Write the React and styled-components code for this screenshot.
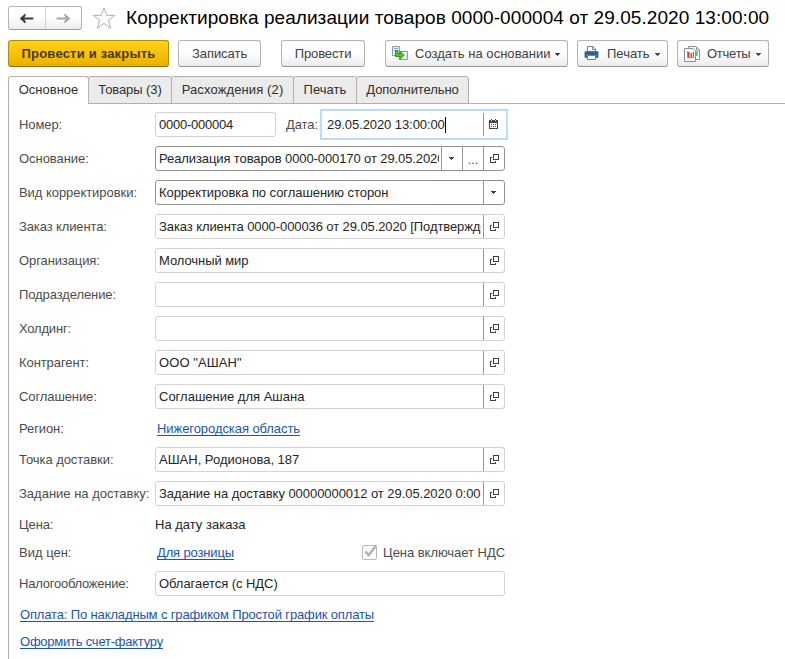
import React from 'react';
import styled, { createGlobalStyle } from 'styled-components';

const GlobalStyle = createGlobalStyle`
  * { box-sizing: border-box; }
  body { margin: 0; background: #fff; overflow: hidden; }
`;

const Page = styled.div`
  width: 785px;
  height: 659px;
  display: flex;
  flex-direction: column;
  font: 13px/16px "Liberation Sans", Arial, sans-serif;
  color: #262626;
  background: #fff;
  overflow: hidden;
  svg { display: block; flex: none; }
`;

const Text = styled.span`
  white-space: pre;
  letter-spacing: ${(p) => p.$track || 0}px;
`;

const Header = styled.header`
  display: flex;
  align-items: center;
  height: 24px;
  margin: 6px 0 10px 8px;
`;

const NavGroup = styled.div`
  display: flex;
  width: 74px;
  height: 24px;
  border: 1px solid #b4b4b4;
  border-bottom-color: #999;
  border-radius: 3px;
  background: linear-gradient(#fff 40%, #ededed);
`;

const NavButton = styled.button`
  display: flex;
  flex: 1;
  align-items: center;
  justify-content: center;
  padding: 1px 0 0;
  border: 0;
  background: none;
  color: ${(p) => (p.$muted ? '#a8a8a8' : '#3c3c3c')};
  & + & { border-left: 1px solid #d2d2d2; }
`;

const Star = styled.svg`
  margin: 0 0 0 10px;
`;

const Title = styled.h1`
  margin: 0 0 0 10px;
  font-size: 19px;
  line-height: 24px;
  font-weight: 400;
  color: #000;
  white-space: nowrap;
  letter-spacing: 0.065px;
`;

const Toolbar = styled.div`
  display: flex;
  height: 27px;
  margin: 0 16px 9px 8px;
`;

const Button = styled.button`
  display: flex;
  align-items: center;
  justify-content: ${(p) => (p.$menu ? 'flex-start' : 'center')};
  width: ${(p) => p.$w}px;
  height: 27px;
  margin: 0 0 0 ${(p) => p.$gap || 0}px;
  padding: ${(p) => (p.$menu ? '0 0 0 6px' : '0')};
  border: 1px solid ${(p) => (p.$primary ? '#b08a0c' : '#b4b4b4')};
  border-bottom-color: ${(p) => (p.$primary ? '#8e6f08' : '#979797')};
  border-radius: 3px;
  background: ${(p) =>
    p.$primary ? 'linear-gradient(#ffd21c, #f9c108 50%, #e9b000)' : 'linear-gradient(#fff 45%, #ebebeb)'};
  font: ${(p) => (p.$primary ? 'bold ' : '')}13px/16px "Liberation Sans", Arial, sans-serif;
  color: ${(p) => (p.$primary ? '#433a22' : '#404040')};
`;

const ButtonText = styled(Text)`
  width: ${(p) => (p.$w ? `${p.$w}px` : 'auto')};
  margin-left: ${(p) => p.$ml || 0}px;
  text-align: left;
`;

const ArrowSlot = styled.span`
  margin-top: 2px;
`;

const Tabs = styled.nav`
  display: flex;
  height: 28px;
  padding-left: 8px;
  background: linear-gradient(#b0b0b0, #b0b0b0) 8px 27px / 100% 1px no-repeat;
`;

const Tab = styled.div`
  display: flex;
  justify-content: center;
  width: ${(p) => p.$w}px;
  height: 28px;
  padding-top: 5px;
  margin-right: -1px;
  border: 1px solid #b0b0b0;
  border-bottom-color: ${(p) => (p.$active ? '#fff' : '#b0b0b0')};
  border-radius: 3px 3px 0 0;
  background: ${(p) => (p.$active ? '#fff' : '#ebebeb')};
  color: #303030;
`;

const Form = styled.main`
  display: flex;
  flex: 1;
  flex-direction: column;
  gap: 9px;
  margin-left: 8px;
  padding: 8px 0 0 10px;
  border-left: 1px solid #b0b0b0;
`;

const Row = styled.div`
  display: flex;
  align-items: center;
  flex: none;
  width: 486px;
  height: ${(p) => p.$h || 25}px;
  padding-top: ${(p) => p.$pt || 0}px;
`;

const Label = styled.label`
  width: ${(p) => p.$w || 136}px;
  padding-left: ${(p) => p.$pl || 0}px;
  flex: none;
  color: #4c4c4c;
`;

const Field = styled.div`
  display: flex;
  flex: ${(p) => (p.$w ? 'none' : '1')};
  width: ${(p) => (p.$w ? `${p.$w}px` : 'auto')};
  min-width: 0;
  height: 25px;
  border: 1px solid ${(p) => (p.$strong ? '#919191' : '#d3d3d3')};
  border-radius: 3px;
  background: #fff;
`;

const DateField = styled(Field)`
  flex: none;
  width: 188px;
  height: 31px;
  margin: -3px -3px -3px 0;
  border: 2px solid #b9dcf8;
  border-radius: 0;
  padding: 2px;
`;

const Value = styled.div`
  flex: 1;
  display: flex;
  align-items: center;
  min-width: 0;
  margin: 0 2px 0 3px;
  overflow: hidden;
`;

const Caret = styled.span`
  width: 1px;
  height: 16px;
  background: #000;
`;

const Affix = styled.div`
  display: flex;
  align-items: center;
  width: 21px;
  padding-left: ${(p) => p.$pl}px;
  flex: none;
  border-left: 1px solid #979797;
  color: #3f3f3f;
`;

const Dots = styled.span`
  font-size: 12px;
  line-height: 14px;
  padding-top: 3px;
`;

const Link = styled.a`
  margin-left: ${(p) => p.$ml || 0}px;
  color: #1b54b4;
  text-decoration: underline;
  text-underline-offset: 2px;
  text-decoration-thickness: 1px;
  text-decoration-skip-ink: none;
  white-space: pre;
  letter-spacing: ${(p) => p.$track || 0}px;
`;

const Check = styled.div`
  display: flex;
  align-items: center;
  gap: 5px;
  margin-left: auto;
  color: #4c4c4c;
  svg { margin-bottom: 1px; }
`;

const Arrow = ({ flip }) => (
  <svg width="15" height="11" viewBox="0 0 15 11">
    <g fill="currentColor" transform={flip ? 'translate(15 0) scale(-1 1)' : undefined}>
      <path d="M.7 5.5 6 .8 7 1.8 5.4 4.4H14.3V6.6H5.4L7 9.2 6 10.2Z" />
    </g>
  </svg>
);

const Down = () => (
  <svg width="5" height="3" viewBox="0 0 5 3" shapeRendering="crispEdges">
    <path d="M0 0H5V1H4V2H3V3H2V2H1V1H0Z" fill="#444" />
  </svg>
);

const OpenIcon = () => (
  <svg width="9" height="9" viewBox="0 0 9 9" shapeRendering="crispEdges">
    <path d="M3 0H9V6H3ZM4 1V5H8V1Z" fillRule="evenodd" fill="#414141" />
    <path d="M0 3H2V4H1V8H5V7H6V9H0Z" fill="#414141" />
  </svg>
);

const CalendarIcon = () => (
  <svg width="9" height="11" viewBox="0 0 9 11" shapeRendering="crispEdges">
    <path d="M0 1H2V0H3V1H6V0H7V1H9V10H0Z" fill="#484848" />
    <path d="M1 4H8V9H1Z" fill="#fff" />
    <path d="M2 5H3V6H2ZM4 5H5V6H4ZM6 5H7V6H6ZM2 7H3V8H2ZM4 7H5V8H4ZM6 7H7V8H6Z" fill="#484848" />
    <path d="M2 1H3V2H2ZM6 1H7V2H6Z" fill="#ddd" />
  </svg>
);

const BasedOnIcon = () => (
  <svg width="17" height="15" viewBox="0 0 17 15">
    <path d="M.5 .5H7.5V9.5H.5Z" fill="#eaf1f6" stroke="#7f9db5" />
    <path d="M2 2.5H6M2 4.5H4" stroke="#8aa6bc" />
    <path d="M7.5 5.5H15.5V13.5H7.5Z" fill="#edf3f7" stroke="#7f9db5" />
    <path d="M3.5 4.5H6V7.8H8V5.2L12 9.2 8 13.2V10.5H3.5Z" fill="#4fc628" stroke="#278c16" strokeWidth=".9" />
  </svg>
);

const PrintIcon = () => (
  <svg width="15" height="15" viewBox="0 0 15 15">
    <path d="M3.5 6V.5H9L11.5 3V6" fill="#fff" stroke="#6885a0" />
    <path d="M8.5 .5V3.5H11.5" fill="none" stroke="#6885a0" />
    <rect x=".5" y="5" width="14" height="7" rx="1.5" fill="#3e6e9b" />
    <path d="M1 7.5H14" stroke="#234f7a" />
    <path d="M3.5 9.5H11.5V13.5H3.5Z" fill="#fff" stroke="#5f7f9c" />
  </svg>
);

const ReportIcon = () => (
  <svg width="17" height="16" viewBox="0 0 17 16">
    <path d="M4.5 2V.5H12L15.5 4V13.5H12" fill="#fff" stroke="#8093a4" />
    <path d="M12.5 1V4H15" fill="none" stroke="#8093a4" />
    <path d="M.5 2.5H9L11.5 5V15.5H.5Z" fill="#fff" stroke="#8093a4" />
    <path d="M3.5 5V11.5H10" fill="none" stroke="#8996a2" />
    <path d="M4 6H5.5V11H4Z" fill="#e83a22" />
    <path d="M6.5 7H8V11H6.5Z" fill="#e05a30" />
    <path d="M8.7 6H10V11H8.7ZM12.3 5H13.6V10H12.3Z" fill="#3ea33a" />
  </svg>
);

const CheckIcon = () => (
  <svg width="16" height="16" viewBox="0 0 16 16">
    <rect x=".5" y="1.5" width="14" height="14" rx="1.5" fill="#fff" stroke="#b9b9b9" />
    <path d="M3.2 7.4 6.7 11 14.3 1.4" fill="none" stroke="#b4b4b4" strokeWidth="2.5" />
  </svg>
);

const affixes = {
  open: <Affix key="open" $pl={6}><OpenIcon /></Affix>,
  down: <Affix key="down" $pl={7}><Down /></Affix>,
  dots: <Affix key="dots" $pl={5}><Dots>...</Dots></Affix>,
};

function FieldRow({ label, lt, value, vt, strong, actions = ['open'] }) {
  return (
    <Row>
      <Label><Text $track={lt}>{label}</Text></Label>
      <Field $strong={strong}>
        <Value><Text $track={vt}>{value}</Text></Value>
        {actions.map((a) => affixes[a])}
      </Field>
    </Row>
  );
}

function MenuButton({ icon, children, w, gap, textW, ml, track }) {
  return (
    <Button $menu $w={w} $gap={gap}>
      {icon}
      <ButtonText $w={textW} $ml={ml} $track={track}>{children}</ButtonText>
      <ArrowSlot><Down /></ArrowSlot>
    </Button>
  );
}

export default function App() {
  return (
    <Page>
      <GlobalStyle />
      <Header>
        <NavGroup>
          <NavButton><Arrow /></NavButton>
          <NavButton $muted><Arrow flip /></NavButton>
        </NavGroup>
        <Star width="24" height="24" viewBox="0 0 24 24" fill="none" stroke="#aab3bb">
          <path d="M12 2 14.7 9.4H22.8L16.3 14.3 18.8 22.2 12 17.4 5.2 22.2 7.7 14.3 1.2 9.4H9.3Z" />
        </Star>
        <Title>Корректировка реализации товаров 0000-000004 от 29.05.2020 13:00:00</Title>
      </Header>

      <Toolbar>
        <Button $primary $w={161}><Text $track={0.2}>Провести и закрыть</Text></Button>
        <Button $w={83} $gap={9}><Text $track={-0.04}>Записать</Text></Button>
        <Button $w={84} $gap={20}><Text $track={-0.12}>Провести</Text></Button>
        <MenuButton icon={<BasedOnIcon />} w={183} gap={20} ml={6} textW={140} track={0.03}>Создать на основании</MenuButton>
        <MenuButton icon={<PrintIcon />} w={91} gap={9} ml={8} textW={48} track={0}>Печать</MenuButton>
        <MenuButton icon={<ReportIcon />} w={92} gap={9} ml={6} textW={49} track={-0.25}>Отчеты</MenuButton>
      </Toolbar>

      <Tabs>
        <Tab $active $w={81}><Text>Основное</Text></Tab>
        <Tab $w={84}><Text $track={-0.08}>Товары (3)</Text></Tab>
        <Tab $w={123}><Text $track={0.12}>Расхождения (2)</Text></Tab>
        <Tab $w={64}><Text $track={0.05}>Печать</Text></Tab>
        <Tab $w={113}><Text $track={-0.09}>Дополнительно</Text></Tab>
      </Tabs>

      <Form>
        <Row>
          <Label><Text $track={-0.1}>Номер:</Text></Label>
          <Field $w={121}><Value><Text $track={-0.25}>0000-000004</Text></Value></Field>
          <Label $w={44} $pl={10}><Text $track={-0.1}>Дата:</Text></Label>
          <DateField>
            <Value><Text $track={-0.08}>29.05.2020 13:00:00</Text><Caret /></Value>
            <Affix $pl={5}><CalendarIcon /></Affix>
          </DateField>
        </Row>
        <FieldRow strong label="Основание:" lt={-0.05} value="Реализация товаров 0000-000170 от 29.05.2020" vt={-0.1} actions={['down', 'dots', 'open']} />
        <FieldRow strong label="Вид корректировки:" lt={-0.05} value="Корректировка по соглашению сторон" vt={-0.06} actions={['down']} />
        <FieldRow label="Заказ клиента:" lt={-0.12} value="Заказ клиента 0000-000036 от 29.05.2020 [Подтвержден]" vt={-0.09} />
        <FieldRow label="Организация:" lt={-0.1} value="Молочный мир" vt={-0.06} />
        <FieldRow label="Подразделение:" lt={-0.1} value="" />
        <FieldRow label="Холдинг:" lt={-0.2} value="" />
        <FieldRow label="Контрагент:" lt={-0.08} value={'ООО "АШАН"'} vt={0.08} />
        <FieldRow label="Соглашение:" lt={-0.1} value="Соглашение для Ашана" vt={0} />
        <Row $h={20} $pt={2}>
          <Label><Text $track={-0.1}>Регион:</Text></Label>
          <Link $ml={2} $track={-0.07}>Нижегородская область</Link>
        </Row>
        <FieldRow label="Точка доставки:" lt={-0.05} value="АШАН, Родионова, 187" vt={0} />
        <FieldRow label="Задание на доставку:" value="Задание на доставку 00000000012 от 29.05.2020 0:00" vt={-0.05} />
        <Row $h={19}>
          <Label><Text $track={-0.1}>Цена:</Text></Label>
          <Text>На дату заказа</Text>
        </Row>
        <Row $h={19}>
          <Label>Вид цен:</Label>
          <Link $ml={2} $track={-0.14}>Для розницы</Link>
          <Check><CheckIcon /><Text $track={-0.04}>Цена включает НДС</Text></Check>
        </Row>
        <FieldRow label="Налогообложение:" lt={-0.23} value="Облагается (с НДС)" vt={-0.05} actions={[]} />
        <Row $h={20}><Link $ml={1} $track={-0.141}>Оплата: По накладным с графиком Простой график оплаты</Link></Row>
        <Row $h={15}><Link $ml={1} $track={-0.23}>Оформить счет-фактуру</Link></Row>
      </Form>
    </Page>
  );
}
